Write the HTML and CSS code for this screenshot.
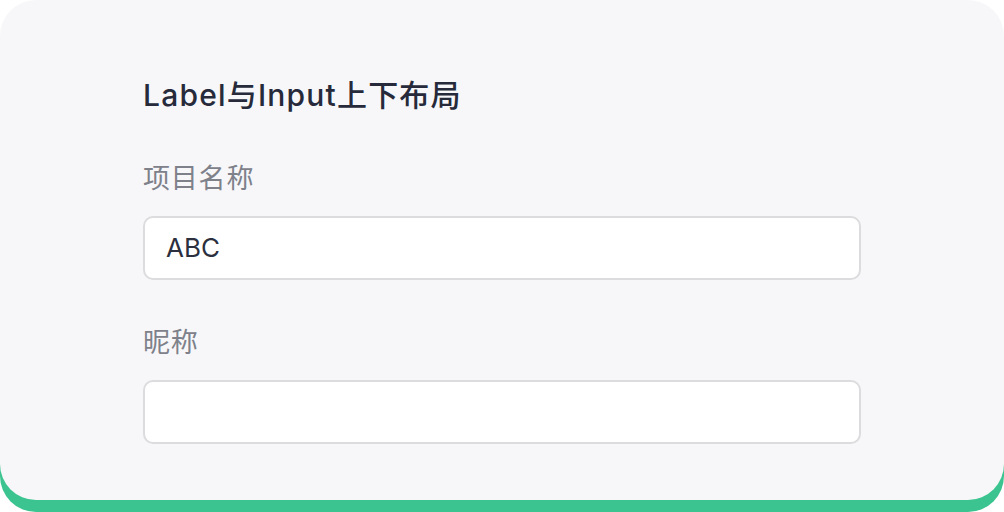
FILE: index.html
```html
<!DOCTYPE html>
<html lang="zh-CN">
<head>
<meta charset="utf-8">
<link rel="stylesheet" href="styles.css">
</head>
<body>
<div class="card">
  <h1 class="title">Label与Input上下布局</h1>
  <div class="field">
    <label class="label">项目名称</label>
    <div class="input">ABC</div>
  </div>
  <div class="field">
    <label class="label">昵称</label>
    <div class="input"></div>
  </div>
</div>
</body>
</html>
```
FILE: styles.css
```css
html, body {
  margin: 0;
  padding: 0;
  background: #ffffff;
}
body {
  font-family: Inter, "Noto Sans CJK SC", sans-serif;
  width: 1004px;
  height: 512px;
  overflow: hidden;
}
.card {
  box-sizing: border-box;
  height: 500px;
  background: #f7f7f9;
  border-radius: 36px;
  box-shadow: 0 12px 0 0 #3bc490;
  padding: 75px 143px 0 143px;
  display: flex;
  flex-direction: column;
}
.title {
  margin: 0;
  font-size: 30px;
  line-height: 40px;
  font-weight: 500;
  letter-spacing: 1.2px;
  color: #262a3a;
}
.field {
  display: flex;
  flex-direction: column;
  gap: 19px;
}
.title + .field {
  margin-top: 46px;
}
.field + .field {
  margin-top: 45px;
}
.label {
  font-size: 27px;
  line-height: 36px;
  letter-spacing: 0.8px;
  color: #7e818a;
}
.input {
  box-sizing: border-box;
  height: 64px;
  background: #ffffff;
  border: 2px solid #dcdcdf;
  border-radius: 10px;
  padding: 0 21px;
  font-size: 26px;
  line-height: 60px;
  color: #2b2f3e;
}
```
